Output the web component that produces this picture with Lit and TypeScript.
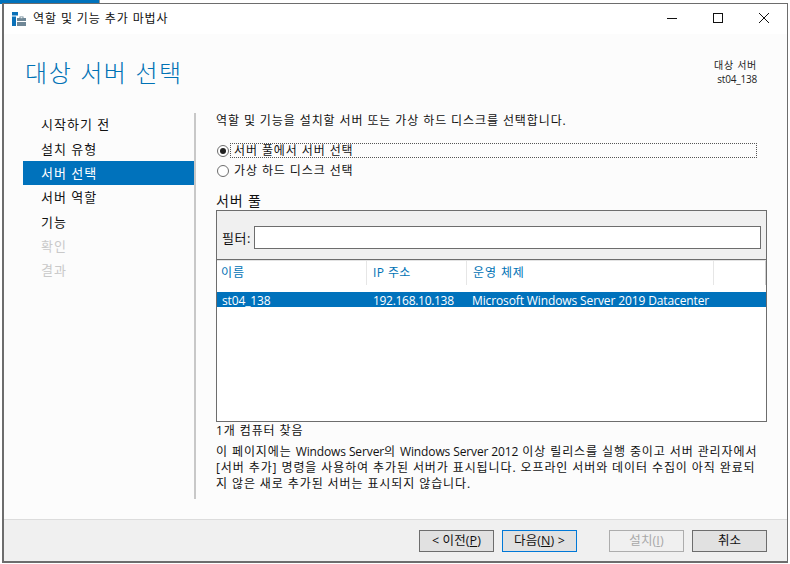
import { LitElement, html, css } from "lit";
import { customElement } from "lit/decorators.js";

@customElement("app-root")
export class AppRoot extends LitElement {
  static styles = css`
    :host { display: block; width: 790px; height: 564px; overflow: hidden; background: #fff; position: relative;
      font-family: "Open Sans", "Noto Sans CJK KR", sans-serif; font-size: 12px; color: #111; letter-spacing: .9px; }
    * { box-sizing: border-box; }
    .desk { position: absolute; left: 0; top: 0; width: 99px; height: 4px; background: #0072bc; }
    .deskline { position: absolute; left: 99px; top: 0; width: 1px; height: 4px; background: #999; }
    .win { position: absolute; left: 2px; top: 3px; width: 786px; height: 560px; border: 2px solid #6d6d6d; border-top-width: 1px; border-right-width: 1px;
      background: #fcfcfc; display: flex; flex-direction: column; }
    .title { height: 30px; background: #fff; display: flex; align-items: center; padding-left: 8px; flex: none; }
    .title svg.app { margin: -1px 7px 0 0; }
    .title .t { flex: 1; line-height: 16px; }
    .wb { width: 46px; height: 30px; display: flex; align-items: center; justify-content: center; }
    .wbs { display: flex; margin-top: -2px; }
    .main { flex: 1; display: flex; flex-direction: column; min-height: 0; }
    .head { height: 79px; flex: none; display: flex; justify-content: space-between; padding: 19px 30px 0 21px; }
    h1 { margin: 3px 0 0 0; font-size: 24px; font-weight: 300; color: #0072b5; line-height: 34px; letter-spacing: 1.6px; }
    .dest { text-align: right; font-size: 10px; line-height: 14px; padding-top: 5px; color: #222; letter-spacing: .7px; }
    .dest span { letter-spacing: -.2px; }
    .body { flex: 1; display: flex; min-height: 0; }
    nav { width: 190px; flex: none; padding: 0 0 20px 19px; }
    .inner { width: 171px; margin-top: -.6px; }
    .item { height: 24.3px; line-height: 25px; padding-left: 18px; font-size: 13px; letter-spacing: 1px; }
    .item.sel { background: #0072bc; color: #fff; }
    .item.dis { color: #c9c9c9; }
    .rule { width: 2px; background: #c8c8c8; margin: 0 0 20px 0; flex: none; }
    .content { flex: 1; padding: 0 20px 0 20px; min-width: 0; display: flex; flex-direction: column; }
    .intro { line-height: 16px; height: 16px; white-space: nowrap; }
    .radio { display: flex; align-items: center; height: 15px; line-height: 15px; }
    .radios { margin-top: 14px; display: flex; flex-direction: column; gap: 5px; }
    .circle { width: 12px; height: 12px; border-radius: 50%; border: 1px solid #6d6d6d; background: #fff; margin: 0 1px; flex: none; display: flex; align-items: center; justify-content: center; }
    .circle i { width: 6px; height: 6px; border-radius: 50%; background: #222; display: block; }
    .rl { flex: 1; padding-left: 4px; white-space: nowrap; }
    .rl.focus { outline: 1px dotted #555; outline-offset: -1px; height: 15px; margin-right: 10px; }
    h2 { margin: 13px 0 0 0; font-size: 14px; font-weight: 400; line-height: 20px; height: 19px; }
    .pool { height: 212px; border: 1px solid #6d6d6d; background: #fff; flex: none; display: flex; flex-direction: column; }
    .filter { height: 49px; flex: none; background: #f0f0f0; border-bottom: 1px solid #6d6d6d; display: flex; align-items: center; padding: 4px 5px 0 5px; }
    .filter label { width: 32px; flex: none; font-size: 13px; letter-spacing: .6px; color: #111; }
    .filter .input { flex: 1; height: 23px; background: #fff; border: 1px solid #6d6d6d; }
    .cols { display: grid; grid-template-columns: 150px 100px 247px 52px; height: 22px; flex: none; border-top: 1px solid #e3e3e3; }
    .cols div { color: #0072b5; padding-left: 4px; line-height: 24px; border-right: 1px solid #e6e6e6; }
    .cols div:nth-child(2) { padding-left: 6px; letter-spacing: .4px; }
    .cols div:nth-child(3) { padding-left: 6px; }
    .cols div:last-child { border-right-color: #d0d0d0; }
    .row { display: grid; grid-template-columns: 150px 100px 1fr; margin-top: 10px; height: 15px; background: #0072bc; color: #fff; line-height: 17px; flex: none; letter-spacing: -.12px; }
    .row div { padding-left: 5px; white-space: nowrap; }
    .row div:nth-child(2) { padding-left: 6px; letter-spacing: -.3px; }
    .count { margin-top: 1px; line-height: 16px; height: 16px; }
    .desc { margin: 5px 0 0 0; line-height: 16px; white-space: nowrap; }
    .lat { letter-spacing: -.12px; }
    .foot { height: 42px; flex: none; background: #f0f0f0; border-top: 1px solid #dcdcdc; display: flex; align-items: flex-start; padding: 10px 20px 0 0; justify-content: flex-end; gap: 8px; }
    .btn { width: 75px; height: 22px; border: 1px solid #6d6d6d; background: #e1e1e1; display: flex; align-items: center; justify-content: center; font-size: 12.5px; color: #111; line-height: 18px; letter-spacing: .1px; white-space: pre; }
    .btn.def { border-color: #0078d7; }
    .btn.off { border-color: #adadad; background: #f0f0f0; color: #a8a8a8; margin-left: 24px; }
    u { text-decoration: underline; }
  `;

  render() {
    const steps = [["시작하기 전", ""], ["설치 유형", ""], ["서버 선택", "sel"], ["서버 역할", ""], ["기능", ""], ["확인", "dis"], ["결과", "dis"]];
    return html`
      <div class="desk"></div>
      <div class="deskline"></div>
      <div class="win">
        <div class="title">
          <svg class="app" width="14" height="14" viewBox="0 0 14 14">
            <rect x="0" y="0" width="6" height="3.5" fill="#0a70b8"/>
            <rect x="0" y="4.5" width="4" height="9.5" fill="#0a70b8"/>
            <path d="M5 6h2.5V4.5h4V6H14v8H5z" fill="#6f8796"/>
            <rect x="8.5" y="5.2" width="2" height="1" fill="#fff"/>
            <rect x="5" y="9" width="9" height="1" fill="#fff"/>
          </svg>
          <span class="t">역할 및 기능 추가 마법사</span>
          <div class="wbs">
            <div class="wb"><svg width="12" height="12" viewBox="0 0 12 12"><path d="M1 6.5h10" stroke="#111" stroke-width="1"/></svg></div>
            <div class="wb"><svg width="12" height="12" viewBox="0 0 12 12"><rect x="1.5" y="1.5" width="9" height="9" fill="none" stroke="#111"/></svg></div>
            <div class="wb"><svg width="12" height="12" viewBox="0 0 12 12"><path d="M1 1l10 10M11 1L1 11" stroke="#111" stroke-width="1"/></svg></div>
          </div>
        </div>
        <div class="main">
          <div class="head">
            <h1>대상 서버 선택</h1>
            <div class="dest">대상 서버<br /><span>st04_138</span></div>
          </div>
          <div class="body">
            <nav><div class="inner">
              ${steps.map(([t, c]) => html`<div class="item ${c}">${t}</div>`)}
            </div></nav>
            <div class="rule"></div>
            <div class="content">
              <div class="intro">역할 및 기능을 설치할 서버 또는 가상 하드 디스크를 선택합니다.</div>
              <div class="radios">
                <div class="radio"><span class="circle"><i></i></span><span class="rl focus">서버 풀에서 서버 선택</span></div>
                <div class="radio"><span class="circle"></span><span class="rl">가상 하드 디스크 선택</span></div>
              </div>
              <h2>서버 풀</h2>
              <div class="pool">
                <div class="filter"><label>필터:</label><div class="input"></div></div>
                <div class="cols"><div>이름</div><div>IP 주소</div><div>운영 체제</div><div></div></div>
                <div class="row"><div>st04_138</div><div>192.168.10.138</div><div>Microsoft Windows Server 2019 Datacenter</div></div>
              </div>
              <div class="count">1개 컴퓨터 찾음</div>
              <p class="desc">이 페이지에는 <span class="lat">Windows Server</span>의 <span class="lat">Windows Server 2012</span> 이상 릴리스를 실행 중이고 서버 관리자에서<br />[서버 추가] 명령을 사용하여 추가된 서버가 표시됩니다. 오프라인 서버와 데이터 수집이 아직 완료되<br />지 않은 새로 추가된 서버는 표시되지 않습니다.</p>
            </div>
          </div>
          <div class="foot">
            <div class="btn">&lt; 이전(<u>P</u>)</div>
            <div class="btn def">다음(<u>N</u>) &gt;</div>
            <div class="btn off">설치(<u>I</u>)</div>
            <div class="btn">취소</div>
          </div>
        </div>
      </div>
    `;
  }
}
